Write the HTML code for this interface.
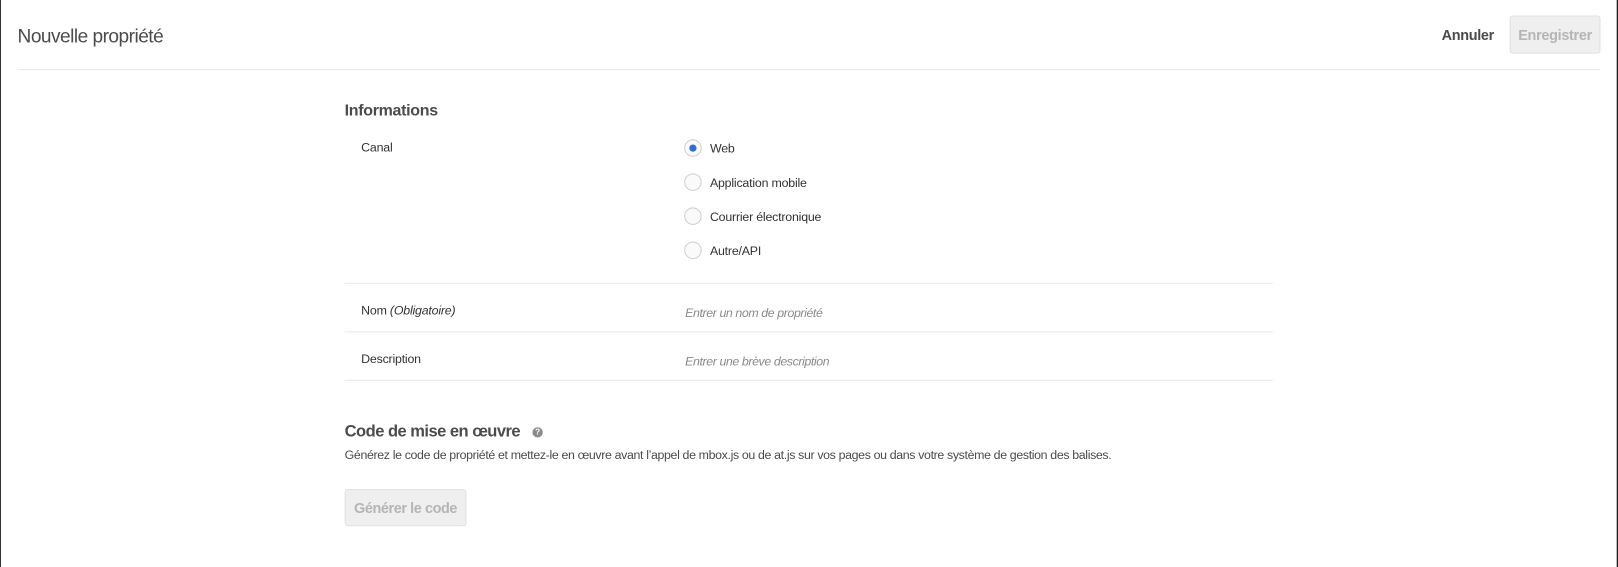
<!DOCTYPE html>
<html><head><meta charset="utf-8"><style>
*{margin:0;padding:0;box-sizing:border-box}
body{width:1618px;height:567px;background:#fff;font-family:"Liberation Sans",sans-serif;color:#4b4b4b;position:relative;overflow:hidden}
#w{position:absolute;left:0;top:0;width:1568px;height:549px;transform:scale(1.0319);transform-origin:0 0}
.a{position:absolute;white-space:nowrap}
.line{position:absolute;height:1px;background:#eaeaea}
.radio{position:absolute;width:17px;height:17px;border:1px solid #cfcfcf;border-radius:50%;background:#fafafa}
.lbl{font-size:12px;color:#333;letter-spacing:-0.2px}
.ph{font-size:12px;color:#8a8a8a;font-style:italic;letter-spacing:-0.4px}
</style></head><body>
<div class="a" style="left:0;top:0;width:1px;height:567px;background:#333"></div>
<div class="a" style="left:1616px;top:0;width:1px;height:567px;background:#bbb"></div>
<div class="a" style="left:1617px;top:0;width:1px;height:567px;background:#222"></div>
<div id="w">
<div class="a" style="left:17px;top:24px;font-size:18.5px;color:#4b4b4b;letter-spacing:-0.5px">Nouvelle propriété</div>
<div class="a" style="left:1397px;top:26px;font-size:14px;font-weight:bold;color:#4b4b4b;letter-spacing:-0.3px">Annuler</div>
<div class="a" style="left:1463px;top:15px;width:88px;height:37px;background:#efefef;border:1px solid #e0e0e0;border-radius:3px;font-size:14px;font-weight:bold;color:#b5b5b5;text-align:center;line-height:37px;letter-spacing:-0.3px">Enregistrer</div>
<div class="line" style="left:17px;top:67px;width:1534px"></div>

<div class="a" style="left:334px;top:99px;font-size:15.5px;font-weight:bold;color:#4b4b4b;letter-spacing:-0.3px">Informations</div>
<div class="a lbl" style="left:350px;top:136px">Canal</div>

<div class="radio" style="left:663px;top:135px"><div style="position:absolute;left:4px;top:4px;width:7px;height:7px;border-radius:50%;background:#2d6fd5"></div></div>
<div class="a lbl" style="left:688px;top:137px">Web</div>
<div class="radio" style="left:663px;top:168px"></div>
<div class="a lbl" style="left:688px;top:170px">Application mobile</div>
<div class="radio" style="left:663px;top:201px"></div>
<div class="a lbl" style="left:688px;top:203px">Courrier électronique</div>
<div class="radio" style="left:663px;top:234px"></div>
<div class="a lbl" style="left:688px;top:236px">Autre/API</div>

<div class="line" style="left:334px;top:274px;width:900px"></div>
<div class="a lbl" style="left:350px;top:294px">Nom <i>(Obligatoire)</i></div>
<div class="a ph" style="left:664px;top:296px">Entrer un nom de propriété</div>
<div class="line" style="left:334px;top:321px;width:900px"></div>
<div class="a lbl" style="left:350px;top:341px">Description</div>
<div class="a ph" style="left:664px;top:343px">Entrer une brève description</div>
<div class="line" style="left:334px;top:368px;width:900px"></div>

<div class="a" style="left:334px;top:410px;font-size:16px;font-weight:bold;color:#4b4b4b;letter-spacing:-0.5px">Code de mise en œuvre</div>
<div class="a" style="left:516px;top:414px;width:10px;height:10px;border-radius:50%;background:#8a8a8a;color:#fff;font-size:8px;font-weight:bold;text-align:center;line-height:10px">?</div>
<div class="a" style="left:334px;top:434px;font-size:12px;color:#4b4b4b;letter-spacing:-0.35px">Générez le code de propriété et mettez-le en œuvre avant l’appel de mbox.js ou de at.js sur vos pages ou dans votre système de gestion des balises.</div>
<div class="a" style="left:334px;top:474px;width:118px;height:36px;background:#efefef;border:1px solid #e0e0e0;border-radius:3px;font-size:14px;font-weight:bold;color:#b5b5b5;text-align:center;line-height:35px;letter-spacing:-0.4px">Générer le code</div>
</div>
</body></html>
